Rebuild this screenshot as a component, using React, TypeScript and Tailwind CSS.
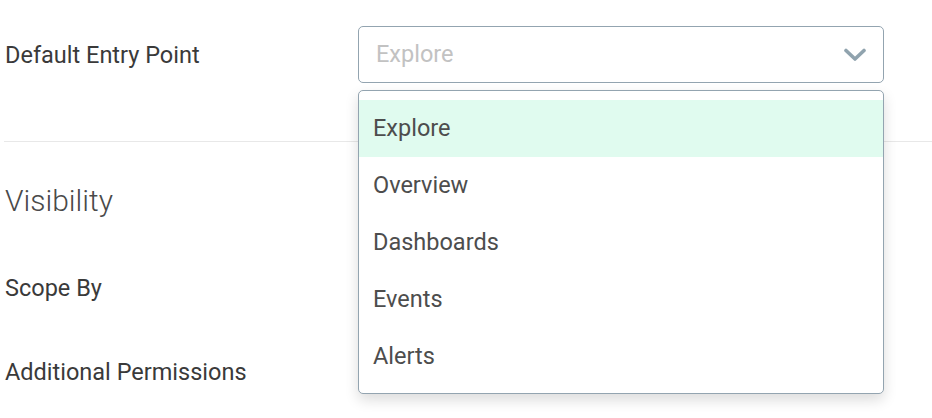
import React, { useState } from 'react';

const options = ['Explore', 'Overview', 'Dashboards', 'Events', 'Alerts'];

const Chevron: React.FC = () => (
  <svg width="22" height="14" viewBox="0 0 22 14" fill="none">
    <polyline points="2,2.5 11,11 20,2.5" stroke="#90a3ae" strokeWidth="3.6" strokeLinecap="round" strokeLinejoin="round" />
  </svg>
);

export default function App() {
  const [value] = useState('Explore');
  const [hover] = useState('Explore');

  return (
    <div className="w-[932px] h-[418px] overflow-hidden bg-white font-['Roboto','Liberation_Sans',sans-serif]">
      {/* Default entry point row */}
      <div className="flex items-center pt-[26px]">
        <div className="w-[358px] pl-[5px] text-[23.5px] leading-[28px] text-[#3a3a3a]">Default Entry Point</div>
        <div className="relative w-[526px]">
          <button className="flex h-[57px] w-full items-center justify-between rounded-[5px] border border-[#93a4b0] bg-white pl-[17px] pr-[17px]">
            <span className="text-[23.5px] text-[#c2c2c2]">{value}</span>
            <Chevron />
          </button>

          {/* open menu */}
          <div className="absolute left-0 right-0 top-[64px] z-10 rounded-[5px] border border-[#93a4b0] bg-white pt-[9px] pb-[8px] shadow-[0_6px_14px_rgba(0,0,0,0.14)]">
            {options.map(o => (
              <div
                key={o}
                className={`flex h-[57px] items-center pl-[14px] text-[23.5px] text-[#4d4d4d] ${o === hover ? 'bg-[#e0fbef]' : ''}`}
              >
                {o}
              </div>
            ))}
          </div>
        </div>
      </div>

      <div className="ml-[4px] mt-[58px] border-t border-[#e8e8e8]" />

      <section className="pl-[5px]">
        <h2 className="mt-[39px] text-[30px] leading-[40px] font-light text-[#4a4a4a]">Visibility</h2>
        <div className="mt-[53px] text-[23.5px] leading-[28px] text-[#3a3a3a]">Scope By</div>
        <div className="mt-[56px] text-[23.5px] leading-[28px] text-[#3a3a3a]">Additional Permissions</div>
      </section>
    </div>
  );
}
